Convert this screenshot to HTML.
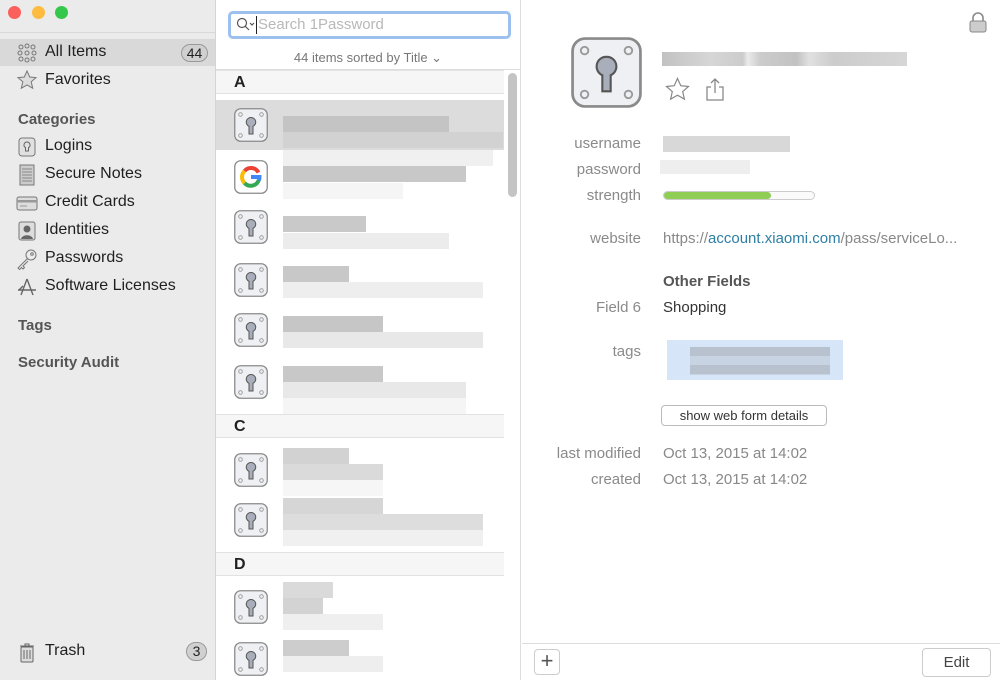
<!DOCTYPE html>
<html><head><meta charset="utf-8"><style>
*{margin:0;padding:0;box-sizing:border-box}
body{width:1000px;height:680px;overflow:hidden;font-family:"Liberation Sans",sans-serif;position:relative;background:#fff;color:#222}
.a{position:absolute}
#side{left:0;top:0;width:216px;height:680px;background:#ebebeb;border-right:1px solid #d4d4d4}
.si{position:absolute;left:45px;font-size:16px;color:#1f1f1f}
.sh{position:absolute;left:18px;font-size:15px;font-weight:bold;color:#555}
.ic{position:absolute;left:16px}
#list{left:216px;top:0;width:305px;height:680px;background:#fff;border-right:1px solid #ddd}
.hdr{position:absolute;left:0;width:288px;height:24px;background:#f6f6f6;border-top:1px solid #e2e2e2;border-bottom:1px solid #e2e2e2;font-weight:bold;font-size:16px;padding:3px 0 0 18px}
.ri{position:absolute;left:18px;width:34px;height:34px}
.b{position:absolute;height:16px}
.lab{position:absolute;width:120px;text-align:right;left:521px;font-size:15px;color:#8a8a8a}
.val{position:absolute;left:663px;font-size:15px;color:#333}
</style></head><body>
<svg width="0" height="0" style="position:absolute"><defs>
<symbol id="k" viewBox="0 0 34 34"><rect x="0.75" y="0.75" width="32.5" height="32.5" rx="6" fill="#eef0f3" stroke="#8a8a8a" stroke-width="1.3"/><g fill="none" stroke="#999" stroke-width="0.9"><circle cx="6.5" cy="6.5" r="1.8"/><circle cx="27.5" cy="6.5" r="1.8"/><circle cx="6.5" cy="27.5" r="1.8"/><circle cx="27.5" cy="27.5" r="1.8"/></g><path d="M17 9.5a4.6 4.6 0 0 1 2 8.8V26h-4v-7.7A4.6 4.6 0 0 1 17 9.5z" fill="#a9aebb" stroke="#555" stroke-width="1"/></symbol>
<symbol id="g" viewBox="0 0 34 34"><rect x="0.75" y="0.75" width="32.5" height="32.5" rx="6" fill="#fff" stroke="#8a8a8a" stroke-width="1.3"/><g fill="none" stroke-width="4"><path d="M24.5 12.5A8.5 8.5 0 0 0 10.5 11" stroke="#ea4335"/><path d="M10.5 11A8.5 8.5 0 0 0 10.5 23" stroke="#fbbc05"/><path d="M10.5 23A8.5 8.5 0 0 0 24.8 20" stroke="#34a853"/><path d="M24.8 20.5A8.5 8.5 0 0 0 25.5 17H17" stroke="#4285f4"/></g></symbol>
</defs></svg>

<div id="side" class="a">
<div class="a" style="left:8px;top:6px;width:13px;height:13px;border-radius:50%;background:#fc605c"></div>
<div class="a" style="left:32px;top:6px;width:13px;height:13px;border-radius:50%;background:#fdbc40"></div>
<div class="a" style="left:55px;top:6px;width:13px;height:13px;border-radius:50%;background:#34c84a"></div>
<div class="a" style="left:0;top:32px;width:215px;height:1px;background:#d8d8d8"></div>
<div class="a" style="left:0;top:39px;width:215px;height:27px;background:#d9d9d9"></div>
<svg class="ic" style="top:42px" width="22" height="22" viewBox="0 0 22 22" fill="none" stroke="#777" stroke-width="1"><circle cx="5" cy="5" r="2"/><circle cx="11" cy="4" r="2"/><circle cx="17" cy="5" r="2"/><circle cx="4" cy="11" r="2"/><circle cx="11" cy="11" r="2"/><circle cx="18" cy="11" r="2"/><circle cx="5" cy="17" r="2"/><circle cx="11" cy="18" r="2"/><circle cx="17" cy="17" r="2"/></svg>
<div class="si" style="top:43px">All Items</div>
<div class="a" style="left:181px;top:44px;width:27px;height:18px;border-radius:9px;background:#d0d0d0;border:1px solid #999;font-size:14px;text-align:center;line-height:16px">44</div>
<svg class="ic" style="top:69px" width="22" height="22" viewBox="0 0 22 22"><path d="M11 2l2.7 6 6.3.6-4.8 4.2 1.5 6.4L11 16l-5.7 3.2 1.5-6.4L2 8.6l6.3-.6z" fill="#ddd" stroke="#777" stroke-width="1"/></svg>
<div class="si" style="top:71px">Favorites</div>
<div class="sh" style="top:111px">Categories</div>
<svg class="ic" style="top:136px" width="22" height="22" viewBox="0 0 22 22"><rect x="3" y="2" width="16" height="18" rx="3" fill="#e0e0e0" stroke="#777"/><path d="M11 6a3 3 0 0 1 1.5 5.6V15h-3v-3.4A3 3 0 0 1 11 6z" fill="none" stroke="#666"/></svg>
<div class="si" style="top:137px">Logins</div>
<svg class="ic" style="top:164px" width="22" height="22" viewBox="0 0 22 22"><rect x="4" y="1" width="14" height="20" fill="#ccc" stroke="#777"/><path d="M6 5h10M6 8h10M6 11h10M6 14h10M6 17h10" stroke="#888"/></svg>
<div class="si" style="top:165px">Secure Notes</div>
<svg class="ic" style="top:192px" width="22" height="22" viewBox="0 0 22 22"><rect x="1" y="5" width="20" height="13" rx="2" fill="#ddd" stroke="#777"/><rect x="1" y="8" width="20" height="2.5" fill="#999"/><path d="M4 14h7" stroke="#999"/></svg>
<div class="si" style="top:193px">Credit Cards</div>
<svg class="ic" style="top:220px" width="22" height="22" viewBox="0 0 22 22"><rect x="3" y="2" width="16" height="18" rx="2" fill="#ddd" stroke="#777"/><circle cx="11" cy="9" r="3.5" fill="#666"/><path d="M5 19c1-5 11-5 12 0z" fill="#666"/></svg>
<div class="si" style="top:221px">Identities</div>
<svg class="ic" style="top:248px" width="22" height="22" viewBox="0 0 22 22" fill="none" stroke="#777"><circle cx="15" cy="7" r="5"/><circle cx="16" cy="6" r="1.3"/><path d="M11.5 10.5L2 20l1.5 1.5 2-2 1.5 1.5 1.5-1.5-1.5-1.5 5-5"/></svg>
<div class="si" style="top:249px">Passwords</div>
<svg class="ic" style="top:276px" width="22" height="22" viewBox="0 0 22 22" fill="none" stroke="#666" stroke-width="1.4"><path d="M11 3L5 19M11 3l6 16M2 14h18M7 10l-4 4"/></svg>
<div class="si" style="top:277px">Software Licenses</div>
<div class="sh" style="top:317px">Tags</div>
<div class="sh" style="top:354px">Security Audit</div>
<svg class="ic" style="top:641px" width="22" height="22" viewBox="0 0 22 22" fill="#ddd" stroke="#666"><path d="M4 5h14M9 5V3h4v2"/><rect x="5" y="6" width="12" height="15" rx="1"/><path d="M8 9v9M11 9v9M14 9v9"/></svg>
<div class="si" style="top:642px">Trash</div>
<div class="a" style="left:186px;top:642px;width:21px;height:19px;border-radius:10px;background:#d0d0d0;border:1px solid #999;font-size:14px;text-align:center;line-height:17px">3</div>
</div>

<div id="list" class="a">
<div class="a" style="left:12px;top:11px;width:283px;height:28px;border:3px solid #9cc1ee;border-radius:5px;background:#fff"></div>
<svg class="a" style="left:20px;top:17px" width="22" height="16" viewBox="0 0 22 16" fill="none" stroke="#555" stroke-width="1.2"><circle cx="6" cy="6" r="4.5"/><path d="M9 9l4 4M14 6l2 2 2-2"/></svg>
<div class="a" style="left:40px;top:16px;width:1px;height:18px;background:#222"></div>
<div class="a" style="left:42px;top:16px;font-size:15px;color:#b8b8b8">Search 1Password</div>
<div class="a" style="left:0;top:50px;width:304px;text-align:center;font-size:13px;color:#777">44 items sorted by Title ⌄</div>
<div class="a" style="left:0;top:69px;width:304px;height:1px;background:#ddd"></div>
<div class="a" style="left:292px;top:73px;width:9px;height:124px;border-radius:5px;background:#c4c4c4"></div>
<div class="hdr" style="top:70px">A</div>
<div class="a" style="left:0;top:100px;width:288px;height:50px;background:#dcdcdc"></div>
<div class="hdr" style="top:414px">C</div>
<div class="hdr" style="top:552px">D</div>

<svg class="ri" style="top:108px"><use href="#k"/></svg>
<svg class="ri" style="top:160px"><use href="#g"/></svg>
<svg class="ri" style="top:210px"><use href="#k"/></svg>
<svg class="ri" style="top:263px"><use href="#k"/></svg>
<svg class="ri" style="top:313px"><use href="#k"/></svg>
<svg class="ri" style="top:365px"><use href="#k"/></svg>
<svg class="ri" style="top:453px"><use href="#k"/></svg>
<svg class="ri" style="top:503px"><use href="#k"/></svg>
<svg class="ri" style="top:590px"><use href="#k"/></svg>
<svg class="ri" style="top:642px"><use href="#k"/></svg>

<div class="b" style="left:67px;top:116px;width:166px;background:#c4c4c4"></div><div class="b" style="left:67px;top:132px;width:220px;background:#d2d2d2"></div>
<div class="b" style="left:67px;top:166px;width:183px;background:#c8c8c8"></div><div class="b" style="left:67px;top:150px;width:210px;background:#f0f0f0"></div><div class="b" style="left:67px;top:183px;width:120px;background:#f5f5f5"></div>
<div class="b" style="left:67px;top:216px;width:83px;background:#c9c9c9"></div><div class="b" style="left:67px;top:233px;width:166px;background:#ececec"></div>
<div class="b" style="left:67px;top:266px;width:66px;background:#c8c8c8"></div><div class="b" style="left:67px;top:282px;width:200px;background:#eeeeee"></div>
<div class="b" style="left:67px;top:316px;width:100px;background:#c6c6c6"></div><div class="b" style="left:67px;top:332px;width:200px;background:#e8e8e8"></div>
<div class="b" style="left:67px;top:366px;width:100px;background:#c8c8c8"></div><div class="b" style="left:67px;top:382px;width:183px;background:#e8e8e8"></div><div class="b" style="left:67px;top:398px;width:183px;background:#f5f5f5"></div>
<div class="b" style="left:67px;top:448px;width:66px;background:#d2d2d2"></div><div class="b" style="left:67px;top:464px;width:100px;background:#dadada"></div><div class="b" style="left:67px;top:480px;width:100px;background:#f6f6f6"></div>
<div class="b" style="left:67px;top:498px;width:100px;background:#d6d6d6"></div><div class="b" style="left:67px;top:514px;width:200px;background:#dddddd"></div><div class="b" style="left:67px;top:530px;width:200px;background:#f0f0f0"></div>
<div class="b" style="left:67px;top:582px;width:50px;background:#dadada"></div><div class="b" style="left:67px;top:598px;width:40px;background:#d3d3d3"></div><div class="b" style="left:67px;top:614px;width:100px;background:#efefef"></div>
<div class="b" style="left:67px;top:640px;width:66px;background:#cdcdcd"></div><div class="b" style="left:67px;top:656px;width:100px;background:#eeeeee"></div>
</div>

<svg class="a" style="left:967px;top:11px" width="22" height="22" viewBox="0 0 22 22"><path d="M6 10V7a5 5 0 0 1 10 0v3" fill="none" stroke="#888" stroke-width="1.6"/><rect x="3" y="10" width="16" height="11" rx="2" fill="#ccc" stroke="#888"/></svg>
<svg class="a" style="left:571px;top:37px" width="71" height="71" viewBox="0 0 34 34"><use href="#k"/></svg>
<div class="a" style="left:662px;top:52px;width:245px;height:14px;background:linear-gradient(90deg,#999 0,#bbb 20%,#aaa 33%,#ddd 35%,#aaa 40%,#999 55%,#ccc 60%,#aaa 70%,#bbb 100%);opacity:.6"></div>
<svg class="a" style="left:665px;top:77px" width="25" height="24" viewBox="0 0 25 24"><path d="M12.5 1.5l3.3 7.2 7.7.8-5.8 5.1 1.7 7.6-6.9-4-6.9 4 1.7-7.6L1.5 9.5l7.7-.8z" fill="none" stroke="#888" stroke-width="1.2"/></svg>
<svg class="a" style="left:705px;top:77px" width="20" height="25" viewBox="0 0 20 25" fill="none" stroke="#888" stroke-width="1.3"><path d="M6 10H2v13h16V10h-4M10 16V2M6 6l4-4 4 4"/></svg>

<div class="lab" style="top:135px">username</div><div class="a" style="left:663px;top:136px;width:127px;height:16px;background:#d8d8d8"></div>
<div class="lab" style="top:161px">password</div><div class="a" style="left:660px;top:160px;width:90px;height:14px;background:#eeeeee"></div>
<div class="lab" style="top:187px">strength</div>
<div class="a" style="left:663px;top:191px;width:152px;height:9px;border:1px solid #ccc;border-radius:5px;background:#fafafa"></div>
<div class="a" style="left:664px;top:192px;width:107px;height:7px;border-radius:4px;background:#8fcd55"></div>
<div class="lab" style="top:230px">website</div>
<div class="val" style="top:230px;color:#888">https://<span style="color:#2d7fa4">account.xiaomi.com</span>/pass/serviceLo...</div>
<div class="val" style="top:273px;font-weight:bold;color:#555">Other Fields</div>
<div class="lab" style="top:299px">Field 6</div><div class="val" style="top:299px">Shopping</div>
<div class="lab" style="top:343px">tags</div>
<div class="a" style="left:667px;top:340px;width:176px;height:40px;background:#d6e5f7"></div>
<div class="a" style="left:690px;top:347px;width:140px;height:28px;background:repeating-linear-gradient(180deg,#b0b8c4 0 9px,#c4d0de 9px 18px);opacity:.8"></div>
<div class="a" style="left:661px;top:405px;width:166px;height:21px;border:1px solid #bbb;border-radius:4px;background:#fff;font-size:13px;text-align:center;line-height:19px;color:#333">show web form details</div>
<div class="lab" style="top:445px">last modified</div><div class="val" style="top:445px;color:#888">Oct 13, 2015 at 14:02</div>
<div class="lab" style="top:471px">created</div><div class="val" style="top:471px;color:#888">Oct 13, 2015 at 14:02</div>

<div class="a" style="left:522px;top:643px;width:478px;height:1px;background:#ddd"></div>
<div class="a" style="left:534px;top:649px;width:26px;height:26px;border:1px solid #ccc;border-radius:4px;background:#fff;text-align:center;font-size:22px;line-height:22px;color:#555">+</div>
<div class="a" style="left:922px;top:648px;width:69px;height:29px;border:1px solid #ccc;border-radius:4px;background:#fff;text-align:center;font-size:15px;line-height:27px;color:#444">Edit</div>
</body></html>
